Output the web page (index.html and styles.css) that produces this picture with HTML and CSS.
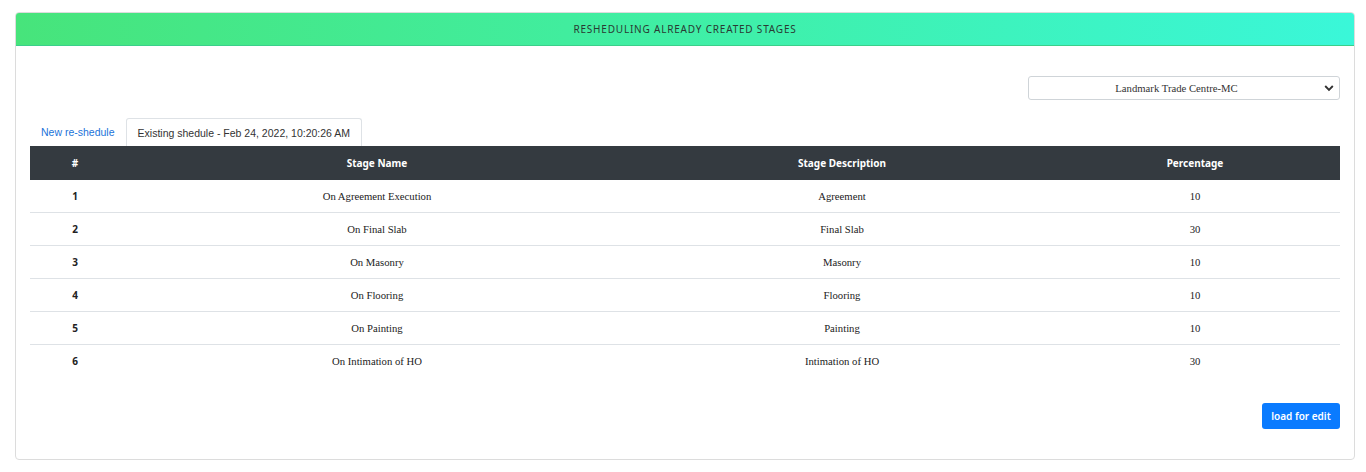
FILE: index.html
```html
<!DOCTYPE html>
<html>
<head>
<meta charset="utf-8">
<link rel="stylesheet" href="styles.css">
</head>
<body>
<div class="card">
  <div class="card-header">RESHEDULING ALREADY CREATED STAGES</div>
  <div class="card-body">
    <div class="select-row">
      <div class="select">
        <span class="select-text">Landmark Trade Centre-MC</span>
        <svg class="chev" width="10" height="8" viewBox="0 0 10 8"><path d="M1.2 2 L5 5.8 L8.8 2" fill="none" stroke="#333" stroke-width="1.9"/></svg>
      </div>
    </div>
    <div class="tabs">
      <a class="tab link">New re-shedule</a>
      <a class="tab active">Existing shedule - Feb 24, 2022, 10:20:26 AM</a>
    </div>
    <table class="stages">
      <colgroup>
        <col class="c1"><col class="c2"><col class="c3"><col class="c4">
      </colgroup>
      <thead>
        <tr><th>#</th><th>Stage Name</th><th>Stage Description</th><th>Percentage</th></tr>
      </thead>
      <tbody>
        <tr><td class="num">1</td><td>On Agreement Execution</td><td>Agreement</td><td>10</td></tr>
        <tr><td class="num">2</td><td>On Final Slab</td><td>Final Slab</td><td>30</td></tr>
        <tr><td class="num">3</td><td>On Masonry</td><td>Masonry</td><td>10</td></tr>
        <tr><td class="num">4</td><td>On Flooring</td><td>Flooring</td><td>10</td></tr>
        <tr><td class="num">5</td><td>On Painting</td><td>Painting</td><td>10</td></tr>
        <tr><td class="num">6</td><td>On Intimation of HO</td><td>Intimation of HO</td><td>30</td></tr>
      </tbody>
    </table>
    <div class="actions">
      <button class="btn">load for edit</button>
    </div>
  </div>
</div>
</body>
</html>
```

FILE: styles.css
```css
html, body {
  margin: 0;
  padding: 0;
  background: #fff;
}
body {
  font-family: "Noto Sans", "Open Sans", sans-serif;
  color: #212529;
}
.card {
  margin: 12px 11px 0 15px;
  width: 1338px;
  height: 446px;
  border: 1px solid #dcdcdc;
  border-radius: 4px;
  box-sizing: content-box;
  overflow: hidden;
}
.card-header {
  height: 32px;
  border-bottom: 1px solid #3bcf8a;
  background: linear-gradient(90deg, #47e47b 0%, #3ff0aa 55%, #3af7d9 100%);
  display: flex;
  align-items: center;
  justify-content: center;
  font-size: 10px;
  letter-spacing: 0.8px;
  color: #2a3a33;
}
.card-body {
  padding: 30px 14px 0 14px;
}
.select-row {
  display: flex;
  justify-content: flex-end;
}
.select {
  width: 310px;
  height: 22px;
  border: 1px solid #cfd4d8;
  border-radius: 3px;
  display: flex;
  align-items: center;
  position: relative;
}
.select-text {
  flex: 1;
  text-align: center;
  font-family: "Liberation Serif", serif;
  font-size: 10.7px;
  color: #333;
}
.chev {
  margin-right: 5px;
}
.tabs {
  display: flex;
  margin-top: 18px;
  height: 28px;
}
.tab {
  display: flex;
  align-items: center;
  font-family: "Liberation Sans", Arial, sans-serif;
  font-size: 10.5px;
  padding: 0 11px;
  box-sizing: border-box;
  height: 28px;
  white-space: nowrap;
}
.tab.link {
  color: #1a73d9;
}
.tab.active {
  border: 1px solid #dee2e6;
  border-bottom: none;
  border-radius: 3px 3px 0 0;
  color: #333;
  padding: 0 11px;
}
.stages {
  width: 1310px;
  border-collapse: collapse;
  table-layout: fixed;
}
.c1 { width: 90px; }
.c2 { width: 514px; }
.c3 { width: 416px; }
.c4 { width: 290px; }
.stages th {
  background: #343a40;
  color: #fff;
  height: 34px;
  padding: 0;
  font-size: 10px;
  font-weight: 700;
  text-align: center;
  vertical-align: middle;
}
.stages td {
  height: 32px;
  padding: 0;
  text-align: center;
  vertical-align: middle;
  font-family: "Liberation Serif", serif;
  font-size: 10.7px;
  color: #222;
  border-top: 1px solid #dee2e6;
}
.stages tbody tr:first-child td {
  border-top: none;
}
.stages td.num {
  font-family: "Noto Sans", sans-serif;
  font-weight: 700;
  font-size: 10px;
  color: #222;
}
.actions {
  display: flex;
  justify-content: flex-end;
  margin-top: 26px;
}
.btn {
  width: 78px;
  height: 26px;
  background: #0a7bff;
  border: none;
  border-radius: 3px;
  color: #fff;
  font-family: "Noto Sans", sans-serif;
  font-weight: 600;
  font-size: 10px;
  padding: 0;
}
```
